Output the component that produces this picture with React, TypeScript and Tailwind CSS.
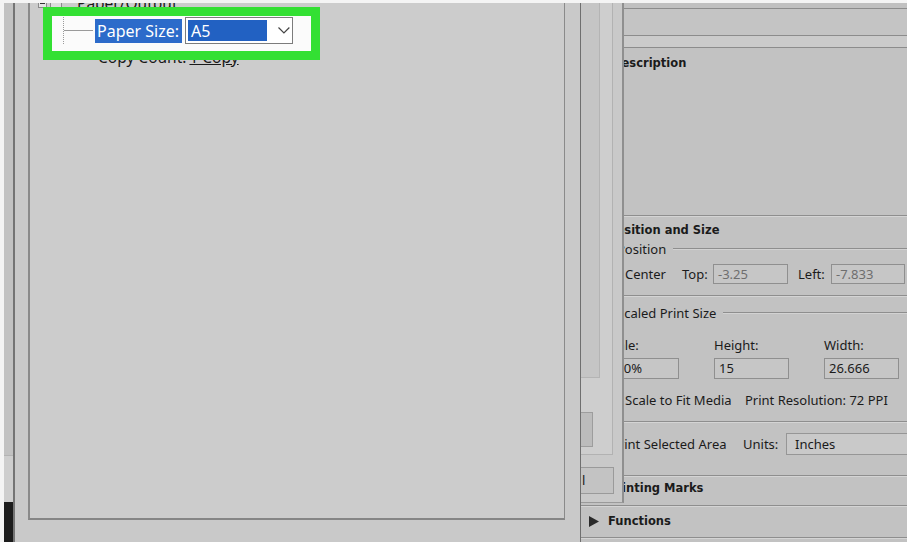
import React from "react";

function Groove() {
  return (
    <>
      <div className="h-px bg-[#8e8e8e] shrink-0" />
      <div className="h-px bg-[#d4d4d4] shrink-0" />
    </>
  );
}

function Tri({ down }: { down?: boolean }) {
  return (
    <svg width="11" height="11" viewBox="0 0 11 11" className="shrink-0">
      {down ? (
        <polygon points="0,2 11,2 5.5,9" fill="#2a2a2a" />
      ) : (
        <polygon points="1,0 11,5.5 1,11" fill="#2a2a2a" />
      )}
    </svg>
  );
}

function Box() {
  return <div className="w-[12px] h-[12px] border border-[#7a7a7a] bg-[#d4d4d4] shrink-0" />;
}

function Legend({ label }: { label: string }) {
  return (
    <div className="flex items-center pl-[36px] h-[18px] shrink-0">
      <span className="leading-none whitespace-nowrap shrink-0">{label}</span>
      <div className="flex-1 ml-[7px] flex flex-col">
        <div className="h-px bg-[#8e8e8e]" />
        <div className="h-px bg-[#d2d2d2]" />
      </div>
    </div>
  );
}

function Input({ w, value, dim }: { w: string; value: string; dim?: boolean }) {
  return (
    <div
      className={`${w} h-full border border-[#8f8f8f] bg-[#c6c6c6] flex items-center pl-[4px] leading-none shrink-0 ${
        dim ? "text-[#6e6e6e]" : "text-[#1b1b1b]"
      }`}
    >
      {value}
    </div>
  );
}

export default function App() {
  return (
    <div className="w-[907px] h-[542px] bg-[#f4f4f4] overflow-hidden pt-[3px] pl-[4px] flex font-['Noto_Sans',sans-serif]">
      {/* far-left strip */}
      <div className="w-[9px] h-[539px] flex flex-col shrink-0">
        <div className="h-[452px] bg-[#c2c2c2]" />
        <div className="h-[47px] bg-[#cecece] border-t border-[#b3b3b3]" />
        <div className="flex-1 bg-[#1c1c1c]" />
      </div>

      {/* print dialog left part */}
      <div className="w-[568px] h-[539px] shrink-0 bg-[#c9c9c9] border-l-2 border-l-[#747474] border-r border-r-[#6f6f6f] pl-[13px] pr-[15px] flex flex-col">
        <div className="h-[517px] bg-[#cccccc] border-l-2 border-l-[#8a8a8a] border-r border-r-[#8a8a8a] border-b-2 border-b-[#858585] relative overflow-hidden shrink-0">
          <div className="mt-[-13px] flex flex-col text-[15.5px] text-[#1a1a1a]">
            {/* Paper/Output */}
            <div className="h-[27px] flex items-center">
              <div className="ml-[8px] w-[9px] h-[9px] border border-[#8a8a8a] bg-[#e4e4e4] flex items-center justify-center shrink-0">
                <div className="w-[5px] h-px bg-[#333]" />
              </div>
              <div className="ml-[3px] w-[12px] h-[12px] border border-[#8a8a8a] bg-[#dcdcdc] shrink-0" />
              <span className="ml-[15px] leading-none whitespace-nowrap">Paper/Output</span>
            </div>
            {/* Paper Size */}
            <div className="h-[27px] flex items-center relative z-20">
              <div className="ml-[33px] w-px self-stretch border-l border-dotted border-[#9a9a9a] shrink-0" />
              <div className="w-[29px] h-px bg-[#9a9a9a] shrink-0" />
              <div className="ml-[2px] h-[24px] w-[87px] pl-[2px] bg-[#2c6bca] text-white text-[16px] flex items-center leading-none whitespace-nowrap shrink-0">
                Paper Size:
              </div>
              <div className="ml-[3px] w-[108px] h-[27px] border border-[#7c7c7c] bg-white flex items-center p-[2px] shrink-0">
                <div className="w-[80px] h-full bg-[#2261c2] text-white text-[16px] flex items-center pl-[3px] leading-none">
                  A5
                </div>
                <svg width="12" height="7" viewBox="0 0 12 7" className="ml-[11px]">
                  <polyline points="0.5,0.5 6,6 11.5,0.5" fill="none" stroke="#444" strokeWidth="1.2" />
                </svg>
              </div>
            </div>
            {/* Copy Count */}
            <div className="h-[27px] flex items-center">
              <span className="ml-[68px] leading-none whitespace-nowrap">Copy Count:</span>
              <span className="ml-[3px] leading-none underline whitespace-nowrap">1 Copy</span>
            </div>
          </div>
          {/* green annotation box */}
          <div className="absolute left-[13px] top-[4px] w-[277px] h-[53px] border-[9px] border-[#33e033] bg-[#fbfbfb] z-10" />
        </div>
      </div>

      {/* right area */}
      <div className="relative w-[326px] h-[539px] shrink-0">
        <div className="flex flex-col h-full bg-[#c2c2c2] text-[13px] text-[#1b1b1b]">
          <div className="h-[5px] bg-[#c0c0c0] shrink-0" />
          <div className="h-px bg-[#8c8c8c] shrink-0" />
          <div className="h-[26px] bg-[#c4c4c4] shrink-0" />
          <div className="h-px bg-[#8c8c8c] shrink-0" />
          <div className="h-[11px] bg-[#cbcbcb] shrink-0" />
          <div className="h-px bg-[#8c8c8c] shrink-0" />

          {/* Description */}
          <div className="h-[167px] shrink-0 pt-[6px]">
            <div className="h-[20px] flex items-center pl-[7px]">
              <Tri down />
              <span className="ml-[13px] font-['DejaVu_Sans',sans-serif] font-bold text-[11.5px] leading-none whitespace-nowrap">
                Description
              </span>
            </div>
          </div>
          <Groove />

          {/* Position and Size */}
          <div className="h-[78px] shrink-0 flex flex-col">
            <div className="h-[20px] mt-[4px] flex items-center pl-[7px] shrink-0">
              <Tri down />
              <span className="ml-[9px] font-['DejaVu_Sans',sans-serif] font-bold text-[11.5px] leading-none whitespace-nowrap">
                Position and Size
              </span>
            </div>
            <div className="-mt-[1px]">
              <Legend label="Position" />
            </div>
            <div className="h-[20px] mt-[6px] flex items-center pl-[27px] shrink-0 whitespace-nowrap">
              <div className="w-[74px] flex items-center shrink-0">
                <Box />
                <span className="ml-[5px] leading-none">Center</span>
              </div>
              <span className="w-[31px] leading-none shrink-0">Top:</span>
              <Input w="w-[75px]" value="-3.25" dim />
              <span className="ml-[10px] w-[33px] leading-none shrink-0">Left:</span>
              <Input w="w-[74px]" value="-7.833" dim />
            </div>
          </div>
          <Groove />

          {/* Scaled Print Size */}
          <div className="h-[124px] shrink-0 flex flex-col">
            <div className="mt-[7px]">
              <Legend label="Scaled Print Size" />
            </div>
            <div className="mt-[14px] h-[18px] flex items-center pl-[23px] shrink-0 leading-none whitespace-nowrap">
              <span className="w-[110px] shrink-0">Scale:</span>
              <span className="w-[110px] shrink-0">Height:</span>
              <span className="shrink-0">Width:</span>
            </div>
            <div className="mt-[4px] h-[21px] flex pl-[23px] shrink-0">
              <Input w="w-[75px]" value="100%" />
              <div className="w-[35px] shrink-0" />
              <Input w="w-[75px]" value="15" />
              <div className="w-[35px] shrink-0" />
              <Input w="w-[75px]" value="26.666" />
            </div>
            <div className="mt-[11px] h-[20px] flex items-center pl-[27px] shrink-0 leading-none whitespace-nowrap">
              <Box />
              <span className="ml-[5px] w-[120px] shrink-0">Scale to Fit Media</span>
              <span className="shrink-0">Print Resolution: 72 PPI</span>
            </div>
          </div>
          <Groove />

          {/* Print Selected Area */}
          <div className="h-[52px] shrink-0 flex flex-col overflow-hidden">
            <div className="mt-[10px] h-[22px] flex items-center pl-[13px] whitespace-nowrap leading-none">
              <Box />
              <span className="ml-[5px] w-[132px] shrink-0">Print Selected Area</span>
              <span className="w-[43px] shrink-0">Units:</span>
              <div className="w-[140px] h-full border border-[#969696] bg-[#c9c9c9] flex items-center pl-[8px] shrink-0">
                Inches
              </div>
            </div>
          </div>
          <Groove />

          {/* Printing Marks */}
          <div className="h-[28px] shrink-0">
            <div className="h-[24px] flex items-center pl-[7px]">
              <Tri />
              <span className="ml-[9px] font-['DejaVu_Sans',sans-serif] font-bold text-[11.5px] leading-none whitespace-nowrap">
                Printing Marks
              </span>
            </div>
          </div>
          <Groove />

          {/* Functions */}
          <div className="h-[30px] shrink-0">
            <div className="h-[27px] mt-[1px] flex items-center pl-[7px]">
              <Tri />
              <span className="ml-[9px] font-['DejaVu_Sans',sans-serif] font-bold text-[11.5px] leading-none whitespace-nowrap">
                Functions
              </span>
            </div>
          </div>
          <Groove />
          <div className="flex-1 bg-[#c2c2c2]" />
        </div>

        {/* overlapping panel */}
        <div className="absolute left-0 top-0 w-[43px] h-[500px] bg-[#c9c9c9] border-r-2 border-r-[#8f8f8f] border-b border-b-[#9a9a9a] z-10 flex flex-col">
          <div className="w-[32px] h-[452px] bg-[#cecece] border-r border-b border-[#b2b2b2] flex flex-col shrink-0">
            <div className="w-[19px] h-[375px] bg-[#c5c5c5] border-r border-b border-[#b4b4b4] shrink-0" />
            <div className="mt-[34px] w-[12px] h-[35px] bg-[#bcbcbc] border border-l-0 border-[#9d9d9d] shrink-0" />
          </div>
          <div className="mt-[12px] w-[33px] h-[27px] bg-[#c3c3c3] border border-l-0 border-[#9a9a9a] flex items-center text-[13px] text-[#1b1b1b] leading-none shrink-0">
            <span className="ml-[1px]">l</span>
          </div>
        </div>
      </div>
    </div>
  );
}
